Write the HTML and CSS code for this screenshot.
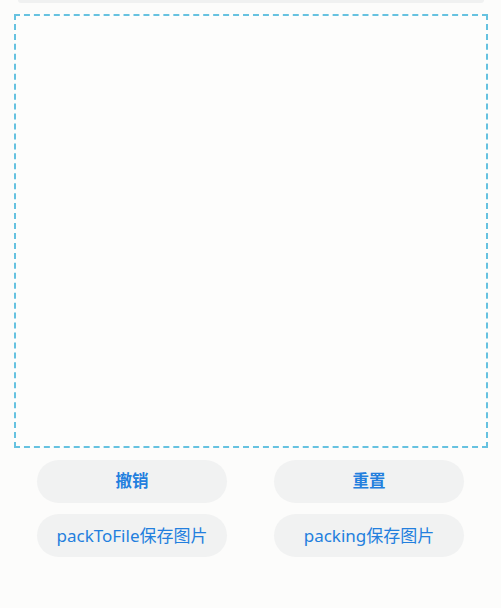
FILE: index.html
```html
<!DOCTYPE html>
<html>
<head>
<meta charset="utf-8">
<link rel="stylesheet" href="styles.css">
</head>
<body>
<div class="page">
  <div class="top-bar"></div>
  <div class="canvas"></div>
  <div class="buttons">
    <button class="btn strong">撤销</button>
    <button class="btn strong">重置</button>
    <button class="btn">packToFile保存图片</button>
    <button class="btn">packing保存图片</button>
  </div>
</div>
</body>
</html>
```

FILE: styles.css
```css
html, body {
  margin: 0;
  padding: 0;
  background: #fcfcfb;
}
.page {
  width: 501px;
  height: 608px;
  display: flex;
  flex-direction: column;
  align-items: center;
}
.top-bar {
  width: 466px;
  height: 3px;
  background: #f0f1f1;
  border-radius: 0 0 8px 8px;
}
.canvas {
  margin-top: 11px;
  width: 470px;
  height: 430px;
  border: 2px dashed #66c2e0;
  background: #fdfdfc;
}
.buttons {
  margin-top: 12px;
  width: 474px;
  display: grid;
  grid-template-columns: 190px 190px;
  justify-content: space-around;
  row-gap: 11px;
}
.btn {
  height: 43px;
  border: none;
  border-radius: 22px;
  background: #f1f2f2;
  color: #237fde;
  font-family: "Noto Sans", "Noto Sans CJK SC", sans-serif;
  font-size: 17px;
  padding: 0 0 2px 0;
}
.btn.strong {
  font-size: 16.5px;
  font-weight: 600;
  padding-bottom: 3px;
}
```
